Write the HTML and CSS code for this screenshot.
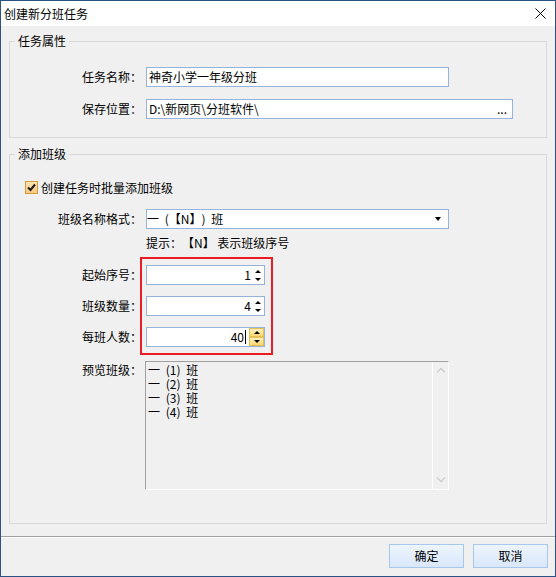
FILE: index.html
```html
<!DOCTYPE html>
<html lang="zh-CN">
<head>
  <meta charset="UTF-8">
  <title>创建新分班任务</title>
  <link rel="stylesheet" href="styles.css">
</head>
<body>
  <div class="window">
    <div class="titlebar">
      <span class="title">创建新分班任务</span>
      <svg class="close" width="11" height="11" viewBox="0 0 11 11">
        <path d="M0.5 0.5 L10.5 10.5 M10.5 0.5 L0.5 10.5" stroke="#000" stroke-width="1" fill="none"/>
      </svg>
    </div>

    <div class="content">
      <fieldset class="group group-task">
        <legend>任务属性</legend>
        <div class="form-grid">
          <label>任务名称：</label>
          <div class="textbox w-short">神奇小学一年级分班</div>
          <label>保存位置：</label>
          <div class="textbox w-long">
            <span>D:\新网页\分班软件\</span>
            <span class="browse">...</span>
          </div>
        </div>
      </fieldset>

      <fieldset class="group group-class">
        <legend>添加班级</legend>
        <div class="check-row">
          <span class="checkbox">
            <svg width="9" height="9" viewBox="0 0 9 9">
              <path d="M1 4.5 L3.5 7 L8 1.5" stroke="#1a1a1a" stroke-width="2" fill="none"/>
            </svg>
          </span>
          <span>创建任务时批量添加班级</span>
        </div>

        <div class="form-grid format-grid">
          <label>班级名称格式：</label>
          <div class="combo w-short">
            <span class="spaced">一 (【N】) 班</span>
            <span class="combo-arrow"></span>
          </div>
          <span></span>
          <div class="hint">提示：【N】 表示班级序号</div>
        </div>

        <div class="spin-block">
          <div class="form-grid spin-row">
            <label>起始序号：</label>
            <div class="spin">
              <span class="spin-value">1</span>
              <span class="spin-btns">
                <span class="arrow-up"></span>
                <span class="arrow-down"></span>
              </span>
            </div>
          </div>
          <div class="form-grid spin-row">
            <label>班级数量：</label>
            <div class="spin">
              <span class="spin-value">4</span>
              <span class="spin-btns">
                <span class="arrow-up"></span>
                <span class="arrow-down"></span>
              </span>
            </div>
          </div>
          <div class="form-grid spin-row spin-row-last">
            <label>每班人数：</label>
            <div class="spin">
              <span class="spin-value">40<span class="caret"></span></span>
              <span class="spin-btns hot">
                <span class="hot-half"><span class="arrow-up"></span></span>
                <span class="hot-half"><span class="arrow-down"></span></span>
              </span>
            </div>
          </div>
          <div class="highlight"></div>
        </div>

        <div class="form-grid preview-row">
          <label>预览班级：</label>
          <div class="listbox">
            <div class="list-items spaced">
              <div>一 (1) 班</div>
              <div>一 (2) 班</div>
              <div>一 (3) 班</div>
              <div>一 (4) 班</div>
            </div>
            <div class="scrollbar">
              <span class="chev chev-up"></span>
              <span class="chev chev-down"></span>
            </div>
          </div>
        </div>
      </fieldset>
    </div>

    <div class="footer">
      <button class="btn">确定</button>
      <button class="btn">取消</button>
    </div>
  </div>
</body>
</html>
```

FILE: styles.css
```css
* {
  box-sizing: border-box;
}

body {
  margin: 0;
  padding: 0;
  font-family: "Noto Sans CJK SC", sans-serif;
  font-size: 12px;
  color: #000;
  text-spacing-trim: space-all;
}

.window {
  width: 556px;
  height: 577px;
  border: 1px solid #2a5282;
  background: #f0f0f0;
  display: flex;
  flex-direction: column;
}

.titlebar {
  height: 25px;
  background: #fff;
  display: flex;
  align-items: center;
  padding-left: 3px;
}

.title {
  line-height: 14px;
}

.close {
  margin-left: auto;
  margin-right: 9px;
}

.content {
  flex: 1;
}

.group {
  margin: 8px 8px 0 8px;
  padding: 0;
  border: 1px solid #d9d9d9;
  min-inline-size: 0;
}

.group legend {
  margin-left: 5px;
  padding: 0 3px;
  line-height: 14px;
}

.group-task {
  padding-top: 19px;
  padding-bottom: 18px;
}

.group-class {
  margin-top: 9px;
  padding-top: 20px;
  padding-bottom: 33px;
}

.form-grid {
  display: grid;
  grid-template-columns: 132px 1fr;
  column-gap: 4px;
  row-gap: 12px;
  align-items: center;
}

.form-grid label {
  text-align: right;
  line-height: 14px;
}

.textbox,
.combo,
.spin {
  height: 20px;
  background: #fff;
  border: 1px solid #96b3dc;
  display: flex;
  align-items: center;
  line-height: 14px;
}

.textbox {
  padding-left: 2px;
}

.w-short {
  width: 303px;
}

.w-long {
  width: 367px;
}

.browse {
  margin-left: auto;
  margin-right: 5px;
}

.spaced {
  word-spacing: 3px;
}

.check-row {
  display: flex;
  align-items: center;
  height: 13px;
  margin-left: 15px;
  gap: 3px;
  line-height: 14px;
}

.checkbox {
  width: 13px;
  height: 13px;
  border: 1px solid #d99a3c;
  background: linear-gradient(#fde3b4, #f8c982);
  display: flex;
  align-items: center;
  justify-content: center;
}

.format-grid {
  margin-top: 15px;
  row-gap: 7px;
}

.combo {
  padding-left: 0;
}

.combo-arrow {
  margin-left: auto;
  margin-right: 7px;
  width: 0;
  height: 0;
  border-left: 3px solid transparent;
  border-right: 3px solid transparent;
  border-top: 4px solid #000;
}

.hint {
  line-height: 14px;
}

.spin-block {
  position: relative;
  margin-top: 15px;
}

.spin-row {
  margin-bottom: 11px;
}

.spin-row + .spin-row-last {
  margin-top: 2px;
  margin-bottom: 0;
}

.spin {
  width: 119px;
  justify-content: flex-end;
}

.spin-value {
  display: flex;
  align-items: center;
}

.caret {
  width: 1px;
  height: 14px;
  background: #000;
  margin-left: 1px;
}

.spin-btns {
  width: 11px;
  height: 18px;
  display: flex;
  flex-direction: column;
  align-items: center;
  justify-content: center;
  gap: 5px;
  margin-left: 1px;
  margin-right: 1px;
}

.spin-btns.hot {
  width: 15px;
  gap: 0;
  margin-left: 3px;
  margin-right: 0;
}

.hot-half {
  flex: 1;
  width: 100%;
  display: flex;
  align-items: center;
  justify-content: center;
  border: 1px solid #e6bf57;
  background: linear-gradient(#fff1c2, #fbd66c);
}

.arrow-up {
  width: 0;
  height: 0;
  border-left: 3px solid transparent;
  border-right: 3px solid transparent;
  border-bottom: 3px solid #000;
}

.arrow-down {
  width: 0;
  height: 0;
  border-left: 3px solid transparent;
  border-right: 3px solid transparent;
  border-top: 3px solid #000;
}

.highlight {
  position: absolute;
  left: 130px;
  top: -8px;
  width: 133px;
  height: 98px;
  border: 2px solid #ec1c24;
  pointer-events: none;
}

.preview-row {
  margin-top: 14px;
  align-items: start;
}

.preview-row label {
  margin-top: 2px;
}

.listbox {
  width: 304px;
  height: 129px;
  border-top: 1px solid #a0a0a0;
  border-left: 1px solid #a0a0a0;
  border-right: 1px solid #fff;
  border-bottom: 1px solid #fff;
  margin-left: -1px;
  display: flex;
}

.list-items {
  flex: 1;
  padding: 1px 0 0 2px;
  line-height: 14px;
}

.scrollbar {
  width: 16px;
  border-left: 1px solid #fff;
  display: flex;
  flex-direction: column;
  justify-content: space-between;
  align-items: center;
  padding: 7px 0 8px;
}

.chev {
  width: 6px;
  height: 6px;
  border-left: 1.5px solid #c4c4c4;
  border-top: 1.5px solid #c4c4c4;
}

.chev-up {
  transform: rotate(45deg);
}

.chev-down {
  transform: rotate(225deg);
}

.footer {
  margin-top: 9px;
  border-top: 1px solid #a0a0a0;
  box-shadow: inset 0 1px 0 #fff;
  padding: 7px 7px 8px 0;
  display: flex;
  justify-content: flex-end;
  gap: 9px;
}

.btn {
  width: 75px;
  height: 24px;
  font-family: "Noto Sans CJK SC", sans-serif;
  font-size: 12px;
  line-height: 14px;
  color: #000;
  border: 1px solid #a7c7ee;
  background: linear-gradient(#edf5fe, #d9e7fa);
  padding: 0;
}
```
